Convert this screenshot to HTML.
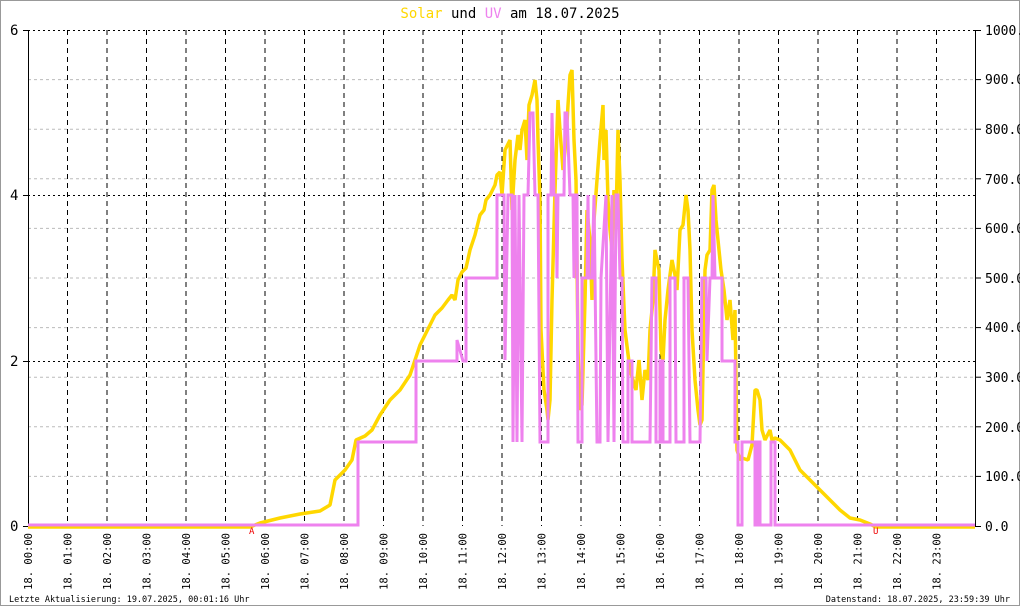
<!DOCTYPE html>
<html><head><meta charset="utf-8"><style>
html,body{margin:0;padding:0;background:#fff}
svg{display:block}
text{font-family:"DejaVu Sans Mono","Liberation Mono",monospace}
</style></head><body>
<svg width="1020" height="606" viewBox="0 0 1020 606" xmlns="http://www.w3.org/2000/svg">
<rect x="0.5" y="0.5" width="1019" height="605" fill="#fff" stroke="#999"/>
<g id="grid">
<g stroke="#bbb" stroke-width="1" stroke-dasharray="3,3">
<line x1="28" y1="476.4" x2="975" y2="476.4"/><line x1="28" y1="426.8" x2="975" y2="426.8"/>
<line x1="28" y1="377.2" x2="975" y2="377.2"/><line x1="28" y1="327.6" x2="975" y2="327.6"/>
<line x1="28" y1="278" x2="975" y2="278"/><line x1="28" y1="228.4" x2="975" y2="228.4"/>
<line x1="28" y1="178.8" x2="975" y2="178.8"/><line x1="28" y1="129.2" x2="975" y2="129.2"/>
<line x1="28" y1="79.6" x2="975" y2="79.6"/>
</g>
<g stroke="#000" stroke-width="1" stroke-dasharray="2,3">
<line x1="28" y1="30.5" x2="975" y2="30.5"/><line x1="28" y1="195.5" x2="975" y2="195.5"/><line x1="28" y1="361.5" x2="975" y2="361.5"/>
</g>
<g stroke="#000" stroke-width="1" stroke-dasharray="5,4">
<line x1="67.5" y1="30" x2="67.5" y2="526"/><line x1="107" y1="30" x2="107" y2="526"/><line x1="146.5" y1="30" x2="146.5" y2="526"/>
<line x1="186" y1="30" x2="186" y2="526"/><line x1="225.5" y1="30" x2="225.5" y2="526"/><line x1="265" y1="30" x2="265" y2="526"/>
<line x1="304.5" y1="30" x2="304.5" y2="526"/><line x1="344" y1="30" x2="344" y2="526"/><line x1="383.5" y1="30" x2="383.5" y2="526"/>
<line x1="423" y1="30" x2="423" y2="526"/><line x1="462.5" y1="30" x2="462.5" y2="526"/><line x1="502" y1="30" x2="502" y2="526"/>
<line x1="541.5" y1="30" x2="541.5" y2="526"/><line x1="581" y1="30" x2="581" y2="526"/><line x1="620.5" y1="30" x2="620.5" y2="526"/>
<line x1="660" y1="30" x2="660" y2="526"/><line x1="699.5" y1="30" x2="699.5" y2="526"/><line x1="739" y1="30" x2="739" y2="526"/>
<line x1="778.5" y1="30" x2="778.5" y2="526"/><line x1="818" y1="30" x2="818" y2="526"/><line x1="857.5" y1="30" x2="857.5" y2="526"/>
<line x1="897" y1="30" x2="897" y2="526"/><line x1="936.5" y1="30" x2="936.5" y2="526"/>
</g>
</g>
<line x1="28.5" y1="30" x2="28.5" y2="526" stroke="#000"/>
<line x1="975.5" y1="30" x2="975.5" y2="526" stroke="#000"/>
<g stroke="#000">
<line x1="23" y1="30.5" x2="28" y2="30.5"/><line x1="23" y1="195.5" x2="28" y2="195.5"/><line x1="23" y1="361.5" x2="28" y2="361.5"/><line x1="23" y1="526.5" x2="28" y2="526.5"/>
<line x1="975" y1="30.5" x2="981" y2="30.5"/><line x1="975" y1="79.6" x2="981" y2="79.6"/><line x1="975" y1="129.2" x2="981" y2="129.2"/><line x1="975" y1="178.8" x2="981" y2="178.8"/><line x1="975" y1="228.4" x2="981" y2="228.4"/><line x1="975" y1="278" x2="981" y2="278"/><line x1="975" y1="327.6" x2="981" y2="327.6"/><line x1="975" y1="377.2" x2="981" y2="377.2"/><line x1="975" y1="426.8" x2="981" y2="426.8"/><line x1="975" y1="476.4" x2="981" y2="476.4"/><line x1="975" y1="526.5" x2="981" y2="526.5"/>
</g>
<polyline fill="none" stroke="#ffd700" stroke-width="3.5" stroke-linejoin="bevel" points="28,527 250,527 260,523 280,518 300,514 320,511 330,505 335,480 345,470 352,460 356,440 365,436 372,430 380,415 390,400 400,390 410,375 415,360 420,345 425,335 430,325 435,315 442,308 448,300 452,295 455,300 458,280 462,272 466,268 470,250 475,235 480,215 484,210 486,200 490,195 495,185 497,175 500,172 502,195 505,150 510,140 512,210 515,160 518,135 520,150 522,130 525,120 527,160 529,105 532,95 535,80 537,100 538,140 540,200 541,330 544,390 547,410 548,420 550,400 552,300 555,190 557,130 558,100 560,130 563,170 566,140 568,105 570,75 572,70 574,140 576,180 578,350 580,410 582,405 585,300 587,210 590,240 592,300 594,220 597,180 600,140 603,105 604,160 606,130 608,200 610,230 612,250 614,190 616,220 618,130 620,180 622,260 625,330 630,370 633,380 636,390 639,360 642,400 645,370 648,380 650,330 653,300 655,250 657,260 659,270 661,350 663,360 665,320 668,290 672,260 675,275 677,290 680,230 683,225 686,195 688,210 690,250 692,330 695,380 698,410 700,425 702,420 705,270 707,255 710,250 712,190 714,185 716,220 718,240 721,270 724,290 727,320 730,300 733,340 735,310 737,450 740,460 742,458 748,460 752,445 755,390 757,390 760,400 762,430 765,440 770,430 772,440 775,438 780,440 785,445 790,450 795,460 800,470 810,480 820,490 830,500 840,510 850,518 860,520 870,524 876,527 975,527"/>
<polyline fill="none" stroke="#ee82ee" stroke-width="3" points="28,525 358,525 358,442 416,442 416,361 457,361 457,340 463,361 466,361 466,278 497,278 497,195 504,195 505,360 508,195 512,195 513,442 515,195 517,442 519,195 522,442 524,195 528,195 530,113 533,113 535,195 538,195 540,442 548,442 548,195 551,195 552,113 554,195 556,195 557,278 558,195 564,195 565,113 567,113 570,195 573,195 574,278 575,195 577,195 578,442 582,442 582,278 587,278 588,195 589,278 592,278 594,195 597,442 600,442 601,278 606,195 608,442 612,195 614,442 616,195 618,195 620,278 622,278 623,442 628,442 628,361 632,361 632,442 650,442 652,278 656,278 656,442 660,442 660,361 663,361 663,442 670,442 670,278 675,278 676,442 684,442 684,278 688,278 690,442 700,442 702,278 706,278 707,361 710,278 712,278 713,195 715,278 722,278 722,361 735,361 735,442 738,442 738,525 742,525 742,442 755,442 755,525 757,525 757,442 760,442 760,525 771,525 771,442 775,442 775,525 975,525"/>
<text x="510" y="18" font-size="14" text-anchor="middle"><tspan fill="#ffd700">Solar</tspan> und <tspan fill="#ee82ee">UV</tspan> am 18.07.2025</text>
<g font-size="14" fill="#000">
<text x="10" y="35">6</text><text x="10" y="200">4</text><text x="10" y="366">2</text><text x="10" y="531">0</text>
</g>
<g font-size="13" fill="#000">
<text x="985" y="35">1000.0</text><text x="985" y="84">900.0</text><text x="985" y="134">800.0</text><text x="985" y="184">700.0</text><text x="985" y="233">600.0</text><text x="985" y="283">500.0</text><text x="985" y="332">400.0</text><text x="985" y="382">300.0</text><text x="985" y="432">200.0</text><text x="985" y="481">100.0</text><text x="985" y="531">0.0</text>
</g>
<text x="249" y="534" font-size="9" fill="#e00">A</text>
<text x="873" y="534" font-size="9" fill="#e00">U</text>
<g font-size="10.5" fill="#000" text-anchor="end">
<text transform="translate(32,533) rotate(-90)">18. 00:00</text>
<text transform="translate(71.5,533) rotate(-90)">18. 01:00</text>
<text transform="translate(111,533) rotate(-90)">18. 02:00</text>
<text transform="translate(150.5,533) rotate(-90)">18. 03:00</text>
<text transform="translate(190,533) rotate(-90)">18. 04:00</text>
<text transform="translate(229.5,533) rotate(-90)">18. 05:00</text>
<text transform="translate(269,533) rotate(-90)">18. 06:00</text>
<text transform="translate(308.5,533) rotate(-90)">18. 07:00</text>
<text transform="translate(348,533) rotate(-90)">18. 08:00</text>
<text transform="translate(387.5,533) rotate(-90)">18. 09:00</text>
<text transform="translate(427,533) rotate(-90)">18. 10:00</text>
<text transform="translate(466.5,533) rotate(-90)">18. 11:00</text>
<text transform="translate(506,533) rotate(-90)">18. 12:00</text>
<text transform="translate(545.5,533) rotate(-90)">18. 13:00</text>
<text transform="translate(585,533) rotate(-90)">18. 14:00</text>
<text transform="translate(624.5,533) rotate(-90)">18. 15:00</text>
<text transform="translate(664,533) rotate(-90)">18. 16:00</text>
<text transform="translate(703.5,533) rotate(-90)">18. 17:00</text>
<text transform="translate(743,533) rotate(-90)">18. 18:00</text>
<text transform="translate(782.5,533) rotate(-90)">18. 19:00</text>
<text transform="translate(822,533) rotate(-90)">18. 20:00</text>
<text transform="translate(861.5,533) rotate(-90)">18. 21:00</text>
<text transform="translate(901,533) rotate(-90)">18. 22:00</text>
<text transform="translate(940.5,533) rotate(-90)">18. 23:00</text>
</g>
<text x="9" y="602" font-size="8.5" fill="#000">Letzte Aktualisierung: 19.07.2025, 00:01:16 Uhr</text>
<text x="1010" y="602" font-size="8.5" fill="#000" text-anchor="end">Datenstand: 18.07.2025, 23:59:39 Uhr</text>
</svg>
</body></html>
